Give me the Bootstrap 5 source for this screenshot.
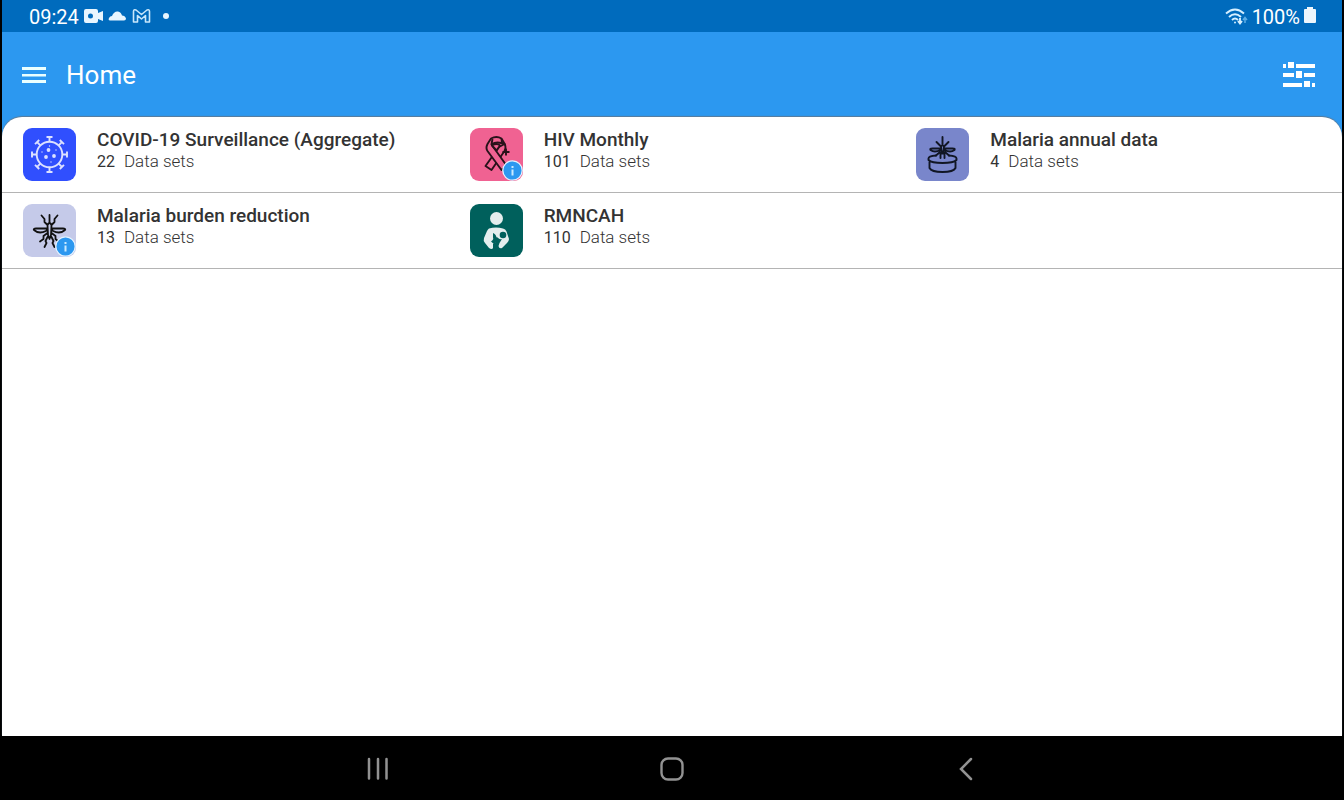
<!DOCTYPE html>
<html lang="en">
<head>
<meta charset="utf-8">
<meta name="viewport" content="width=device-width, initial-scale=1">
<title>Home</title>
<link href="https://cdn.jsdelivr.net/npm/bootstrap@5.3.0/dist/css/bootstrap.min.css" rel="stylesheet">
<style>
body { font-family: Roboto, "Liberation Sans", sans-serif; background: #000; color: #333; }
.screen { background: #2c98f0; margin: 0 2px; }
.status-bar { background: #006bbd; height: 32px; font-size: 20px; line-height: 32px; padding: 1px 26px 0 27px; }
.app-bar { height: 85px; padding: 0 27px 0 20px; }
.app-bar h1 { font-size: 26px; line-height: 32px; }
.programs { border-radius: 20px 20px 0 0; box-shadow: 0 -1px 1px #5b7c99; }
.program-row { border-bottom: 1px solid #b4b4b4; }
.program { padding: 11px 21px; gap: 21px; color: inherit; }
.tile { width: 53px; height: 53px; border-radius: 9px; }
.tile > svg { display: block; }
.covid { background: #304ffe; }
.hiv { background: #f06292; }
.annual { background: #7986cb; }
.burden { background: #c5cae9; }
.rmncah { background: #00605c; }
.info-dot { right: 0; bottom: 0; }
.program h2 { font-size: 19px; line-height: 24px; font-weight: 500; }
.program p { font-size: 17px; line-height: 19px; font-weight: 300; }
.count { font-size: 16px; font-weight: 400; margin-right: 9px; }
.system-nav { height: 64px; gap: 20%; padding-top: 2px; }
.system-nav button { width: 26px; }
</style>
</head>
<body>
<div class="d-flex flex-column min-vh-100">
  <div class="screen d-flex flex-column flex-grow-1">
    <div class="status-bar d-flex align-items-center text-white">
      <span>09:24</span>
      <svg class="ms-1" width="100" height="24" viewBox="1 1 100 24" aria-hidden="true">
        <path fill="#e8f6ff" fill-rule="evenodd" d="M4 5h10q2 0 2 2v2l5-2v10l-5-2v2q0 2-2 2H4q-2 0-2-2V7q0-2 2-2zm4.500 4.500a2.500 2.500 0 1 0 0 5a2.500 2.500 0 0 0 0-5z"/>
        <path fill="#e8f6ff" d="M28 16.500q-2 0-1-2.500q1-2 3-2q2-5 6-4.500q3 .5 4 4q3 0 4 3q0 2-2 2z"/>
        <path fill="none" stroke="#c8e7fb" stroke-width="1.600" stroke-linejoin="round" d="M51.500 18V7.500q0-2.500 2.500-1.500l5.500 4.500L65 6q2.500-1 2.500 1.500V18h-4v-6.500l-4 3.500l-4-3.500V18z"/>
        <circle cx="84" cy="12" r="3" fill="#e8f6ff"/>
      </svg>
      <svg class="ms-auto me-1" width="24" height="22" viewBox="0 0 24 22" fill="none" stroke="#d5efff" stroke-width="1.900" aria-hidden="true">
        <path d="M2 7.500q9-8 18 0M5 11q6-5.500 12 0M8 14q3-3 6 0"/>
        <circle cx="11" cy="16.500" r="1" fill="#d5efff" stroke="none"/>
        <path d="M16 12v5m-2-2l2 2.500l2-2.500"/><path stroke="#5eaee6" stroke-width="1.500" d="M21 17v-5m-2 2l2-2.500l2 2.500"/>
      </svg>
      <span>100%</span>
      <svg class="ms-1" width="12" height="20" viewBox="0 1 12 20" aria-hidden="true"><path fill="#edf6fc" d="M3 1h6v2h2q1 0 1 1v12q0 1-1 1H1q-1 0-1-1V4q0-1 1-1h2z"/></svg>
    </div>
    <header class="app-bar d-flex align-items-center text-white">
      <button class="btn p-0 border-0 d-flex" aria-label="Open menu">
        <svg width="24" height="18" viewBox="0 0 24 18" fill="#eaffff"><path d="M0 1h24v3H0zM0 8h24v2.500H0zM0 14h24v3H0z"/></svg>
      </button>
      <h1 class="mb-0 ms-3 ps-1 fw-normal">Home</h1>
      <button class="btn p-0 border-0 d-flex ms-auto" aria-label="Filters">
        <svg width="32" height="26" viewBox="0 0 32 26" fill="#fff"><path d="M0 2h3v4H0zM5 0h6v6H5zM13 2h19v4H13zM0 11h11v4H0zM13 9h6v7h-6zM21 11h11v4H21zM0 21h19v4H0zM21 19h6v6h-6zM29 21h3v4h-3z"/></svg>
      </button>
    </header>
    <main class="programs bg-white flex-grow-1">
      <div class="program-row row row-cols-3 g-0">
        <a href="#" class="program col d-flex text-decoration-none">
          <span class="tile covid flex-shrink-0">
            <svg width="53" height="53" viewBox="0 0 53 53" fill="none" stroke="#dce1ff" stroke-width="1.900" aria-hidden="true">
              <circle cx="26.500" cy="26.500" r="12.800"/>
              <path d="M26.500 14V9M23.500 9h6M26.500 39v5M23.500 44h6M14 26.500H9M9 23.500v6M39 26.500h5M44 23.500v6"/>
              <path d="M17.600 17.600l-3.500-3.500M12 16.200l4.200-4.200M35.400 17.600l3.500-3.500M36.800 12l4.200 4.200M17.600 35.400l-3.500 3.500M12 36.800l4.200 4.200M35.400 35.400l3.500 3.500M36.800 41l4.200-4.200"/>
              <g fill="#dce1ff" stroke="none"><circle cx="25.500" cy="22" r="1.900"/><circle cx="23" cy="29" r="1.900"/><circle cx="31" cy="28" r="1.900"/><circle cx="26.500" cy="18" r=".7"/><circle cx="19" cy="24" r=".7"/><circle cx="33" cy="22" r=".7"/><circle cx="28" cy="34" r=".7"/></g>
            </svg>
          </span>
          <div>
            <h2 class="mb-0">COVID-19 Surveillance (Aggregate)</h2>
            <p class="mb-0"><span class="count">22</span>Data sets</p>
          </div>
        </a>
        <a href="#" class="program col d-flex text-decoration-none">
          <span class="tile hiv flex-shrink-0 position-relative">
            <svg width="53" height="53" viewBox="0 0 53 53" fill="#f06292" stroke="#29121a" stroke-width="1.900" stroke-linejoin="round" aria-hidden="true">
              <path d="M34.500 16q2 3 0 7L21.500 42l-6-4L29 19z"/>
              <path d="M17.500 16l3.500-5.500q5.500-3 10.500 0L35 16.500q-8-4-13.500 0l15 21-5 4.500L17.500 23q-2-3 0-7z"/>
              <path d="M21.500 16.500l1-5.500M31.500 11l.5 4M22 17.500q5-3 8 0l-3.500 5z"/>
              <path d="M36 20.500v7M32.500 24h7"/>
            </svg>
            <svg class="info-dot position-absolute" width="21" height="21" viewBox="0 0 21 21" aria-hidden="true"><circle cx="10.500" cy="10.500" r="9.700" fill="#2c98f0" stroke="#e4f3ff" stroke-width="1.300"/><path fill="#c9eaff" d="M9.500 6h2v2h-2zM9.500 9.500h2v6h-2z"/></svg>
          </span>
          <div>
            <h2 class="mb-0">HIV Monthly</h2>
            <p class="mb-0"><span class="count">101</span>Data sets</p>
          </div>
        </a>
        <a href="#" class="program col d-flex text-decoration-none">
          <span class="tile annual flex-shrink-0">
            <svg width="53" height="53" viewBox="0 0 53 53" fill="none" stroke="#111624" stroke-width="1.900" stroke-linecap="round" stroke-linejoin="round" aria-hidden="true">
              <path d="M20 27.500q-7.500.5-7.500 3v1.500q3 3 14 3t14-3v-1.500q0-2.500-7.500-3M13.500 34v6q2 4 13 4t13-4v-6"/>
              <path d="M26.500 9v7M25 18.500q1.500-2.500 3 0l-.5 5h-2zM24.500 18l-4-4M28.500 18l4-4M24.500 20.500h-8q-3 0-2 1.500q4 3 10 0M28.500 20.500h8q3 0 2 1.500q-4 3-10 0M24 24l-4 3.500M29 24l4 3.500M24.500 30v-4.500h4V30"/>
            </svg>
          </span>
          <div>
            <h2 class="mb-0">Malaria annual data</h2>
            <p class="mb-0"><span class="count">4</span>Data sets</p>
          </div>
        </a>
      </div>
      <div class="program-row row row-cols-3 g-0">
        <a href="#" class="program col d-flex text-decoration-none">
          <span class="tile burden flex-shrink-0 position-relative">
            <svg width="53" height="53" viewBox="0 0 53 53" fill="none" stroke="#111" stroke-width="1.800" stroke-linecap="round" stroke-linejoin="round" aria-hidden="true">
              <path d="M26.500 11v8M24.500 21q2-4 4 0l-.5 10l-1.500 4l-1.500-4zM24.500 21l-3-3v-3l-3-3.500M28.500 21l3-3v-3l3-3.500M24.500 24.500H13q-3 0-2 1.500q5 4.500 12 1l1.500-2M28.500 24.500H40q3 0 2 1.500q-5 4.500-12 1l-1.500-2M24.500 29l-4 3v3l-3.500 2.500M28.500 29l4 3v3l3 2.500M24.500 33l-2 4l1 2l-2 4M28.500 33l2 4l-1 2l2 4"/>
            </svg>
            <svg class="info-dot position-absolute" width="21" height="21" viewBox="0 0 21 21" aria-hidden="true"><circle cx="10.500" cy="10.500" r="9.700" fill="#2c98f0" stroke="#e4f3ff" stroke-width="1.300"/><path fill="#c9eaff" d="M9.500 6h2v2h-2zM9.500 9.500h2v6h-2z"/></svg>
          </span>
          <div>
            <h2 class="mb-0">Malaria burden reduction</h2>
            <p class="mb-0"><span class="count">13</span>Data sets</p>
          </div>
        </a>
        <a href="#" class="program col d-flex text-decoration-none">
          <span class="tile rmncah flex-shrink-0">
            <svg width="53" height="53" viewBox="0 0 53 53" fill="#e4eeee" aria-hidden="true">
              <circle cx="26.500" cy="14.500" r="6.500"/>
              <path d="M19 24.500q7-2 14 0q2.500.5 3.500 3L39 35q0 2-2 4l-5 5q-3 1-3.500-2l1-3l2.500-4q-3 1-5-2l-2 2l1 3l-3 2v4q-1 2-4 0l-4-5q-2-2-1-5l3-7q1-2 2-2.500z"/>
              <path fill="#00605c" d="M23 29q3 1 3.500 4.500l3 1.500l-3 2.500l-2 3l-3.500-3q3-2 2-4z"/><circle cx="33" cy="31" r="3.300" fill="#00605c"/>
            </svg>
          </span>
          <div>
            <h2 class="mb-0">RMNCAH</h2>
            <p class="mb-0"><span class="count">110</span>Data sets</p>
          </div>
        </a>
      </div>
    </main>
  </div>
  <nav class="system-nav d-flex justify-content-center align-items-center" aria-label="System">
    <button class="btn p-0 border-0 d-flex justify-content-center" aria-label="Recent apps"><svg width="26" height="26" viewBox="0 0 26 26" stroke="#929292" stroke-width="2.500" stroke-linecap="round"><path d="M5 3v19.500M14 3v19.500M22.500 3v19.500"/></svg></button>
    <button class="btn p-0 border-0 d-flex justify-content-center" aria-label="Home screen"><svg width="26" height="26" viewBox="0 0 26 26" fill="none" stroke="#929292" stroke-width="2.400"><rect x="2.500" y="2.500" width="21" height="21" rx="6.500"/></svg></button>
    <button class="btn p-0 border-0 d-flex justify-content-center" aria-label="Back"><svg width="26" height="26" viewBox="0 0 26 26" fill="none" stroke="#929292" stroke-width="2.500" stroke-linecap="round"><path d="M17 3L7 13L17 23"/></svg></button>
  </nav>
</div>
<script src="https://cdn.jsdelivr.net/npm/bootstrap@5.3.0/dist/js/bootstrap.bundle.min.js"></script>
</body>
</html>
